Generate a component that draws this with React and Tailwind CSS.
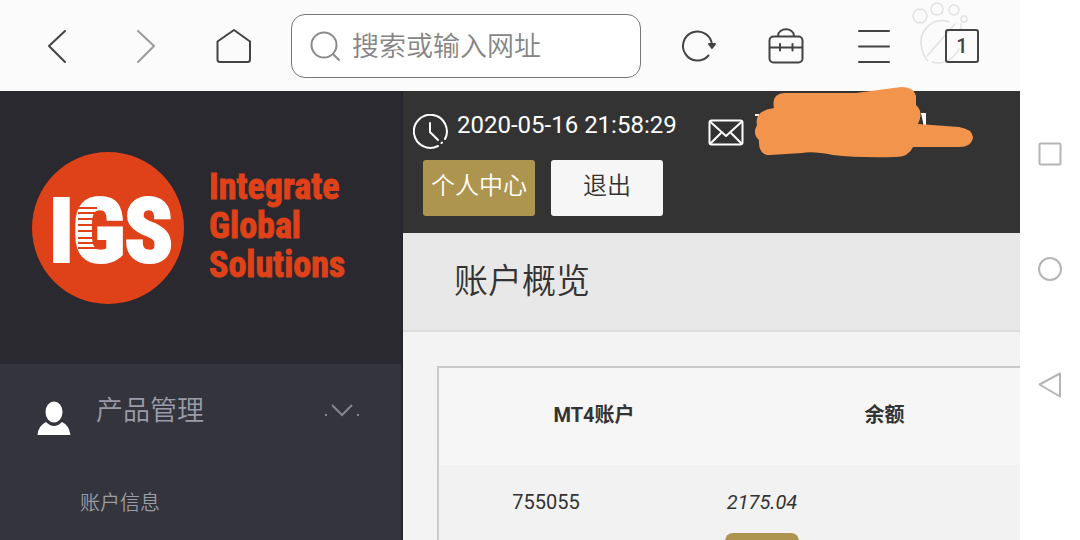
const barIcon = {
  width: 40,
  height: 40,
  viewBox: '0 0 40 40',
  fill: 'none',
  stroke: 'currentColor',
  strokeWidth: 2,
  strokeLinecap: 'round',
  strokeLinejoin: 'round',
};

function BarButton({ label, children, className = 'text-[#434343]' }) {
  return (
    <button type="button" aria-label={label} className={`flex w-[88px] justify-center ${className}`}>
      <svg {...barIcon}>{children}</svg>
    </button>
  );
}

function BrowserBar() {
  return (
    <header className="flex h-[91px] shrink-0 items-center bg-[#fbfbfb] px-[14px]">
      <BarButton label="后退">
        <path d="M27 5 L11 20 L27 36" />
      </BarButton>
      <BarButton label="前进" className="text-[#9b9b9b]">
        <path d="M12 5 L28 20 L12 36" />
      </BarButton>
      <BarButton label="主页">
        <path d="M20 4 L36 15.500 V33.500 Q36 36 33.500 36 H6 Q3.500 36 3.500 33.500 V15.500 Z" />
      </BarButton>

      <label className="mx-[13px] flex h-16 min-w-0 flex-1 items-center gap-[6px] rounded-[14px] border border-[#777] bg-white pl-[14px]">
        <svg {...barIcon} className="shrink-0 text-[#8a8a8a]">
          <circle cx="18" cy="19" r="12.500" />
          <path d="M27 28 L33 34" />
        </svg>
        <input
          type="text"
          aria-label="网址"
          placeholder="搜索或输入网址"
          className="w-full min-w-0 bg-transparent pt-1 text-[27px] font-[350] text-[#555] outline-none placeholder:text-[#858585]"
        />
      </label>

      <BarButton label="刷新">
        <path d="M30.500 29.500 A14.500 14.500 0 1 1 34 19" />
        <path d="M31 18 H37 L34 22 Z" fill="currentColor" />
      </BarButton>
      <BarButton label="工具箱">
        <rect x="3.500" y="10.500" width="33" height="26" rx="4" />
        <path d="M12 10 C12 1 28 1 28 10 M4 21.500 H36 M14 18 V24.500 M26.500 18 V24.500" />
      </BarButton>
      <BarButton label="菜单">
        <path d="M5 5 H35 M5 20.500 H35 M5 36 H35" />
      </BarButton>
      <button type="button" aria-label="标签页" className="relative flex w-[88px] justify-center text-[#434343]">
        <svg className="absolute -top-[30px] -left-[6px]" width="60" height="70" fill="none" stroke="#e2e2e2" strokeWidth="1.500" strokeLinecap="round">
          <circle cx="8" cy="17" r="7" />
          <circle cx="25" cy="10" r="6" />
          <circle cx="42" cy="11" r="5" />
          <circle cx="52" cy="20" r="3" />
          <path d="M37 23 C20 17 5 33 10 50 Q12 59 16 62 M43 25 L15 57 M20 63 C32 67 42 59 47 50 M49 31 V25" />
        </svg>
        <span className="relative flex h-[34px] w-[34px] items-center justify-center rounded-[3px] border-2 border-[#434343] text-[20px] leading-none font-medium">
          1
        </span>
      </button>
    </header>
  );
}

function Logo() {
  return (
    <svg width="340" height="154" viewBox="0 0 340 154" role="img" aria-label="IGS" fontFamily="'Liberation Sans Narrow', 'Roboto Condensed', sans-serif" fontWeight="700">
      <circle cx="76" cy="77" r="76" fill="#df4118" />
      <text x="79" y="110" textAnchor="middle" fontSize="88" fill="#fff" stroke="#fff" strokeWidth="4">
        IGS
      </text>
      <path d="M46 57 H65 M46 62 H65 M46 68 H65 M46 74 H65 M46 80 H65 M46 87 H65 M46 92 H65 M46 97 H65" stroke="#df4118" strokeWidth="2" />
      <g fontSize="36" fill="#df4118" stroke="#df4118" strokeWidth="1">
        <text x="177" y="48">Integrate</text>
        <text x="177" y="87">Global</text>
        <text x="177" y="126">Solutions</text>
      </g>
    </svg>
  );
}

function Sidebar() {
  return (
    <aside className="flex w-[403px] shrink-0 flex-col border-r-2 border-[#25262c] bg-[#33343c] text-[#9b9ca8]">
      <div className="h-[273px] shrink-0 bg-[#2a292f] pt-[60px] pl-8">
        <Logo />
      </div>
      <nav>
        <button type="button" className="flex h-[94px] w-full items-center pr-[42px] pl-9 text-left">
          <svg width="36" height="36" viewBox="0 0 36 36" fill="#fff" className="mt-[14px]">
            <ellipse cx="18" cy="12" rx="8.500" ry="10.500" />
            <path d="M10 22 Q18 30 26 22 Q33 25 34.500 35 H1.500 Q2 26 10 22 Z" />
          </svg>
          <span className="ml-6 flex-1 text-[27px] font-[350]">产品管理</span>
          <svg width="36" height="20" viewBox="0 0 36 20" fill="none" stroke="#85868f" strokeWidth="2">
            <path d="M9 4 L19 14 L29 4" />
            <path d="M2 14 H4 M34 14 H36" />
          </svg>
        </button>
        <a href="#account" className="flex h-[90px] items-center pl-20 text-[20px] font-[350]">
          账户信息
        </a>
      </nav>
    </aside>
  );
}

function TopPanel() {
  return (
    <div className="relative h-[142px] shrink-0 bg-[#333] px-[10px] pt-4 text-white">
      <div className="flex h-[48px]">
        <svg width="36" height="36" viewBox="0 0 36 36" fill="none" stroke="#fff" strokeWidth="2" strokeLinecap="round" className="mt-[7px]">
          <path d="M25 32 A16.500 16.500 0 1 1 32 25" />
          <path d="M17 9 V18 L25 26 M28.500 29 L29 28.500" />
        </svg>
        <time className="ml-2 text-[24px] leading-9">2020-05-16 21:58:29</time>
        <svg width="36" height="28" viewBox="0 0 36 28" fill="none" stroke="#fff" strokeWidth="2" strokeLinejoin="round" className="mt-3 ml-[31px]">
          <rect x="1.500" y="1.500" width="33" height="24" rx="2" />
          <path d="M2 2.500 L18 17 L34 2.500 M2 25 L13 14 M34 25 L23 14" />
        </svg>
      </div>
      {/* marker strokes hiding the mail address */}
      <svg className="absolute -top-1 left-[350px]" width="222" height="72" viewBox="0 0 222 72">
        <path d="M168 26 H173 V40 H171 Z M2 27 H6 V29 H2 Z" fill="#fff" />
        <path
          d="M31 6 H103 L148 0 Q161 0 163 9 V18 Q171 25 165 37 L206 40 Q219 42 220 50 Q219 60 206 60 H160 Q156 70 142 70 Q105 71 80 68 Q60 64 49 66 L17 68 Q5 68 6 53 Q-1 47 4 38 Q1 24 21 21 Q18 7 31 6 Z"
          fill="#f3944d"
        />
      </svg>
      <div className="mt-[5px] ml-[10px] flex gap-4 text-[24px]">
        <button type="button" className="h-14 w-28 rounded-[3px] bg-[#ae954f] pb-1 font-[350] whitespace-nowrap">
          个人中心
        </button>
        <button type="button" className="h-14 w-28 rounded-[3px] bg-[#f6f6f6] pb-1 font-[350] text-[#333]">
          退出
        </button>
      </div>
    </div>
  );
}

function AccountTable() {
  return (
    <div className="ml-[34px] flex-1 border-t-2 border-l-2 border-[#cacaca] bg-[#f2f2f2]">
      <table className="w-full table-fixed text-center text-[20px]">
        <colgroup>
          <col className="w-[214px]" />
          <col className="w-[96px]" />
          <col className="w-[122px]" />
          <col />
        </colgroup>
        <thead className="bg-[#f6f6f6]">
          <tr className="h-[97px]">
            <th colSpan={2} className="pb-1 font-bold">MT4账户</th>
            <th colSpan={2} className="pb-1 font-bold">余额</th>
          </tr>
        </thead>
        <tbody>
          <tr className="align-top">
            <td className="pt-[22px]">755055</td>
            <td colSpan={2} className="pt-[22px]">
              <em className="block">2175.04</em>
              <button type="button" aria-label="操作" className="mt-4 h-10 w-[74px] rounded-lg bg-[#ae954f]" />
            </td>
            <td />
          </tr>
        </tbody>
      </table>
    </div>
  );
}

function SystemKeys() {
  return (
    <div className="flex w-[60px] shrink-0 flex-col items-center gap-[91px] bg-white pt-[142px] text-[#b5b5b5]">
      <button type="button" aria-label="最近任务">
        <svg width="24" height="24" fill="none" stroke="currentColor" strokeWidth="2">
          <rect x="1.500" y="1.500" width="21" height="21" rx="1" />
        </svg>
      </button>
      <button type="button" aria-label="桌面">
        <svg width="24" height="24" fill="none" stroke="currentColor" strokeWidth="2">
          <circle cx="12" cy="12" r="11" />
        </svg>
      </button>
      <button type="button" aria-label="返回">
        <svg width="24" height="26" fill="none" stroke="currentColor" strokeWidth="2" strokeLinejoin="round">
          <path d="M1.500 12.500 L22 1.500 V24.500 Z" />
        </svg>
      </button>
    </div>
  );
}

export default function App() {
  return (
    <div className="flex h-screen overflow-hidden font-[Roboto,'Noto_Sans_CJK_SC',sans-serif] text-[#333]">
      <div className="flex min-w-0 flex-1 flex-col">
        <BrowserBar />
        <div className="flex min-h-0 flex-1">
          <Sidebar />
          <main className="flex min-w-0 flex-1 flex-col bg-[#f3f3f3]">
            <TopPanel />
            <div className="mb-[34px] flex h-[99px] shrink-0 items-center border-b-2 border-[#dbdddf] bg-[#e9e8e8] pl-[51px]">
              <h1 className="text-[34px] font-[350]">账户概览</h1>
            </div>
            <AccountTable />
          </main>
        </div>
      </div>
      <SystemKeys />
    </div>
  );
}
